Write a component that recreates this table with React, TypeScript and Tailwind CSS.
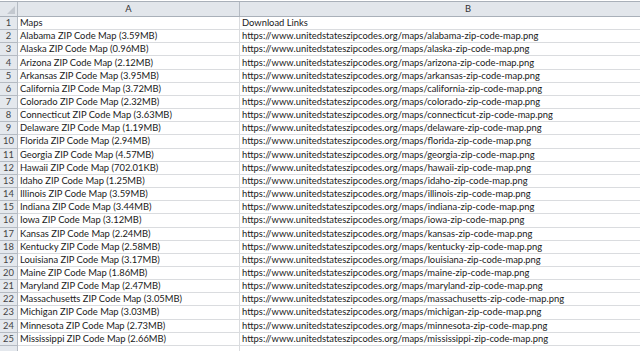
import React from "react";

const rows: [string, string][] = [
  ["Maps", "Download Links"],
  ["Alabama ZIP Code Map (3.59MB)", "alabama"],
  ["Alaska ZIP Code Map (0.96MB)", "alaska"],
  ["Arizona ZIP Code Map (2.12MB)", "arizona"],
  ["Arkansas ZIP Code Map (3.95MB)", "arkansas"],
  ["California ZIP Code Map (3.72MB)", "california"],
  ["Colorado ZIP Code Map (2.32MB)", "colorado"],
  ["Connecticut ZIP Code Map (3.63MB)", "connecticut"],
  ["Delaware ZIP Code Map (1.19MB)", "delaware"],
  ["Florida ZIP Code Map (2.94MB)", "florida"],
  ["Georgia ZIP Code Map (4.57MB)", "georgia"],
  ["Hawaii ZIP Code Map (702.01KB)", "hawaii"],
  ["Idaho ZIP Code Map (1.25MB)", "idaho"],
  ["Illinois ZIP Code Map (3.59MB)", "illinois"],
  ["Indiana ZIP Code Map (3.44MB)", "indiana"],
  ["Iowa ZIP Code Map (3.12MB)", "iowa"],
  ["Kansas ZIP Code Map (2.24MB)", "kansas"],
  ["Kentucky ZIP Code Map (2.58MB)", "kentucky"],
  ["Louisiana ZIP Code Map (3.17MB)", "louisiana"],
  ["Maine ZIP Code Map (1.86MB)", "maine"],
  ["Maryland ZIP Code Map (2.47MB)", "maryland"],
  ["Massachusetts ZIP Code Map (3.05MB)", "massachusetts"],
  ["Michigan ZIP Code Map (3.03MB)", "michigan"],
  ["Minnesota ZIP Code Map (2.73MB)", "minnesota"],
  ["Mississippi ZIP Code Map (2.66MB)", "mississippi"],
];

export default function App() {
  return (
    <div
      className="w-[640px] h-[351px] overflow-hidden bg-white text-[9.4px] text-[#1a1a1a]"
      style={{ fontFamily: "Lato, 'Liberation Sans', sans-serif" }}
    >
      <div className="h-[1px] bg-white" />
      {/* column headers */}
      <div className="flex h-[16px] border-y border-[#a9b0b9] bg-[#e2e6eb] text-[#333]">
        <div className="w-[18px] shrink-0 border-r border-[#b5bbc3] relative">
          <div className="absolute right-[2px] bottom-[2px] w-0 h-0 border-l-[8px] border-l-transparent border-b-[8px] border-b-[#c3c8cf]" />
        </div>
        <div className="w-[222px] shrink-0 border-r border-[#b5bbc3] flex items-center justify-center">A</div>
        <div className="w-[456px] shrink-0 flex items-center justify-center">B</div>
      </div>
      {rows.concat([["", ""]]).map(([a, b], i) => (
        <div key={i} className="flex h-[13.16px]">
          <div className="w-[18px] shrink-0 bg-[#e4e8ed] border-r border-b border-[#b5bbc3] flex items-center justify-center text-[#444]">
            {i < 25 ? i + 1 : ""}
          </div>
          <div className="w-[222px] shrink-0 border-r border-b border-[#dadcdf] flex items-center pl-[2px] whitespace-nowrap overflow-hidden">
            {a}
          </div>
          <div className="w-[456px] shrink-0 border-b border-[#dadcdf] flex items-center pl-[2px] whitespace-nowrap overflow-hidden">
            {i === 0
              ? b
              : b
              ? `https://www.unitedstateszipcodes.org/maps/${b}-zip-code-map.png`
              : ""}
          </div>
        </div>
      ))}
    </div>
  );
}
